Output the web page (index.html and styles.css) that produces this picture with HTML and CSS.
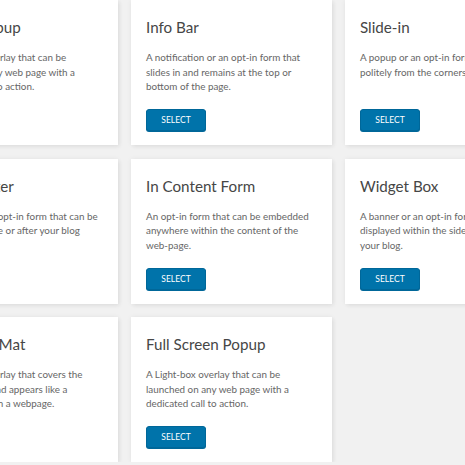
FILE: index.html
```html
<!DOCTYPE html>
<html lang="en">
<head>
<meta charset="utf-8">
<title>Module types</title>
<link rel="stylesheet" href="styles.css">
</head>
<body>
<div class="grid">
  <div class="card">
    <h3 class="card-title">Modal Popup</h3>
    <p class="card-desc">A Light-box overlay that can be launched on any web page with a dedicated call to action.</p>
    <button class="btn">SELECT</button>
  </div>
  <div class="card">
    <h3 class="card-title">Info Bar</h3>
    <p class="card-desc">A notification or an opt-in form that slides in and remains at the top or bottom of the page.</p>
    <button class="btn">SELECT</button>
  </div>
  <div class="card">
    <h3 class="card-title">Slide-in</h3>
    <p class="card-desc">A popup or an opt-in form that slides in politely from the corners of the screen.</p>
    <button class="btn">SELECT</button>
  </div>
  <div class="card">
    <h3 class="card-title">Before After</h3>
    <p class="card-desc">A banner or an opt-in form that can be displayed before or after your blog posts.</p>
    <button class="btn">SELECT</button>
  </div>
  <div class="card">
    <h3 class="card-title">In Content Form</h3>
    <p class="card-desc">An opt-in form that can be embedded anywhere within the content of the web-page.</p>
    <button class="btn">SELECT</button>
  </div>
  <div class="card">
    <h3 class="card-title">Widget Box</h3>
    <p class="card-desc">A banner or an opt-in form that can be displayed within the sidebar area of your blog.</p>
    <button class="btn">SELECT</button>
  </div>
  <div class="card">
    <h3 class="card-title">Welcome Mat</h3>
    <p class="card-desc">A Light-box overlay that covers the entire screen and appears like a welcome mat on a webpage.</p>
    <button class="btn">SELECT</button>
  </div>
  <div class="card">
    <h3 class="card-title">Full Screen Popup</h3>
    <p class="card-desc">A Light-box overlay that can be launched on any web page with a dedicated call to action.</p>
    <button class="btn">SELECT</button>
  </div>
</div>
</body>
</html>
```

FILE: styles.css
```css
html, body {
  margin: 0;
  padding: 0;
  overflow: hidden;
  background: #f1f1f1;
  font-family: Lato, "Noto Sans", "Liberation Sans", sans-serif;
}

.grid {
  display: grid;
  grid-template-columns: repeat(3, 201px);
  grid-auto-rows: 145px;
  column-gap: 13px;
  row-gap: 13.5px;
  margin-left: -83px;
}

.card {
  display: flex;
  flex-direction: column;
  align-items: flex-start;
  background: #ffffff;
  box-shadow: 0 0 5px rgba(0, 0, 0, 0.06), 2px 2px 4px rgba(0, 0, 0, 0.05);
  padding: 17px 15px 14px 15px;
  box-sizing: border-box;
}

.card-title {
  margin: 0;
  font-size: 15.2px;
  line-height: 20px;
  font-weight: 400;
  color: #464646;
}

.card-desc {
  margin: 13px 0 0 0;
  font-size: 9.85px;
  line-height: 14.7px;
  color: #666666;
}

.btn {
  margin-top: auto;
  width: 60px;
  height: 22px;
  padding: 0;
  background: #0073aa;
  border: 1px solid #006799;
  border-radius: 3px;
  box-shadow: 0 1px 0 #006799;
  color: #ffffff;
  font-family: inherit;
  font-size: 8.5px;
  line-height: 20px;
  cursor: pointer;
}
```
